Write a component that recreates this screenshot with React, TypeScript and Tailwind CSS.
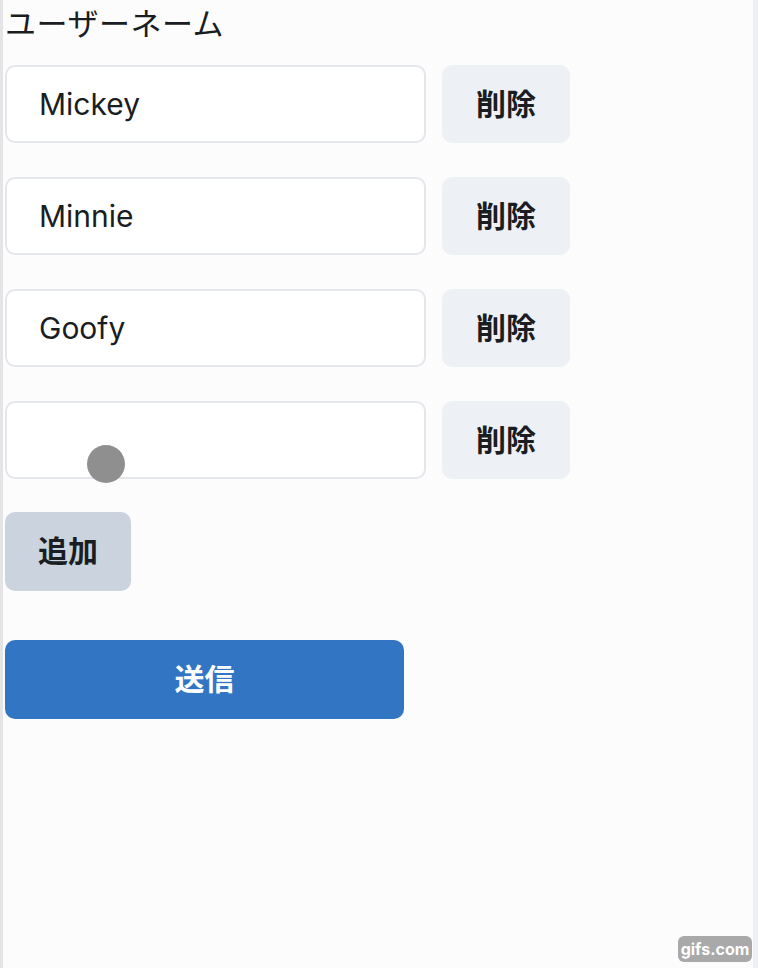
import { useState } from 'react';

const jp = { fontFamily: 'Inter, "Noto Sans CJK JP", sans-serif' };

export default function App() {
  const [names, setNames] = useState(['Mickey', 'Minnie', 'Goofy', '']);

  return (
    <div
      className="relative min-h-[968px] w-full bg-[#fcfcfc] border-l-[3px] border-[#e4e4e6] text-[#1a1d21]"
      style={jp}
    >
      <div className="pl-[2px] pr-[6px]">
        <label className="block text-[31px] leading-[42px] pt-[1px] tracking-[0.5px]" style={{ fontFamily: '"Noto Sans CJK JP", sans-serif' }}>
          ユーザーネーム
        </label>

        <div className="mt-[22px] flex flex-col gap-[34px]">
          {names.map((n, i) => (
            <div key={i} className="flex items-center gap-[16px]">
              <input
                value={n}
                onChange={e => setNames(names.map((v, j) => (j === i ? e.target.value : v)))}
                className="w-[421px] h-[78px] rounded-[10px] border-2 border-[#e3e6eb] bg-white px-[32px] text-[30px] outline-none"
              />
              <button
                onClick={() => setNames(names.filter((_, j) => j !== i))}
                className="w-[128px] h-[78px] rounded-[10px] bg-[#edf0f4] text-[30px] font-bold"
              >
                削除
              </button>
            </div>
          ))}
        </div>

        <button
          onClick={() => setNames([...names, ''])}
          className="mt-[33px] block w-[126px] h-[79px] rounded-[10px] bg-[#cbd3de] text-[30px] font-bold"
        >
          追加
        </button>

        <button className="mt-[49px] block w-[399px] h-[79px] rounded-[10px] bg-[#3276c3] text-[30px] font-bold text-white">
          送信
        </button>
      </div>

      {/* cursor dot */}
      <div className="absolute left-[84px] top-[445px] w-[38px] h-[38px] rounded-full bg-[#8f8f8f]" />

      {/* right edge strip */}
      <div className="absolute right-0 top-0 bottom-0 w-[5px] bg-[#eef0f3]" />

      {/* watermark */}
      <div className="absolute right-[6px] bottom-[6px] w-[74px] h-[26px] rounded-[6px] bg-[#a9a9a9] flex items-center justify-center text-white text-[16px] font-bold leading-none">
        gifs.com
      </div>
    </div>
  );
}
